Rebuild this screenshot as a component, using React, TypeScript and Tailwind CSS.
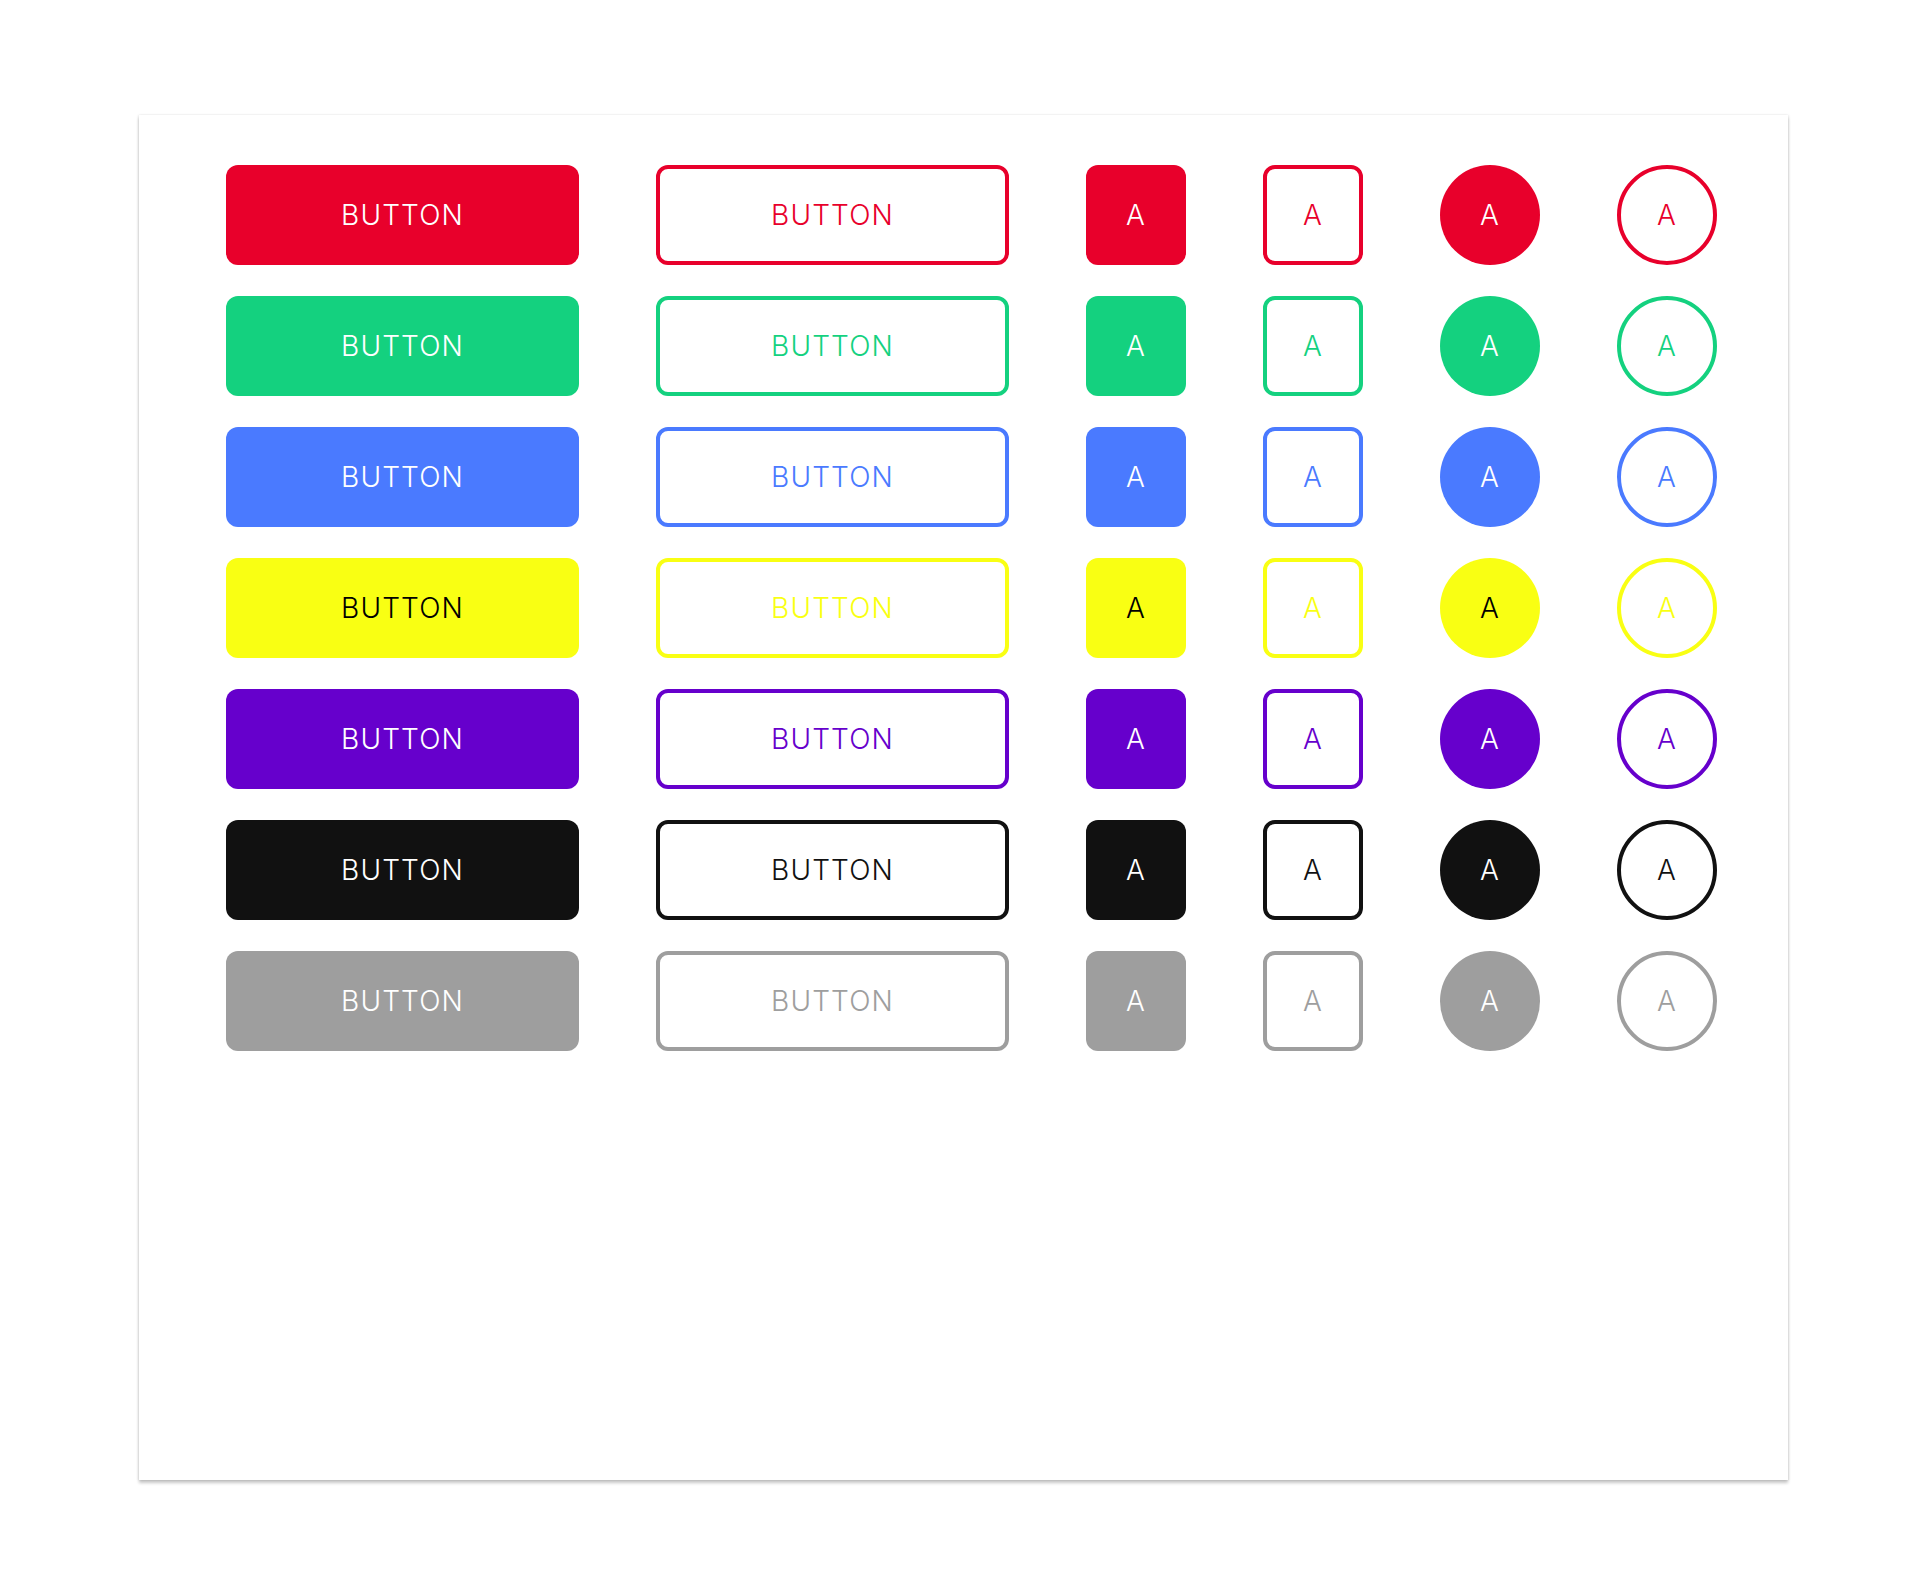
import React from "react";

type V = { fill: string; text: string; outline: string; otext: string };

const rows: V[] = [
  { fill: "bg-[#e8002b]", text: "text-white", outline: "border-[#e8002b]", otext: "text-[#e8002b]" },
  { fill: "bg-[#14d17f]", text: "text-white", outline: "border-[#14d17f]", otext: "text-[#14d17f]" },
  { fill: "bg-[#4a7aff]", text: "text-white", outline: "border-[#4a7aff]", otext: "text-[#4a7aff]" },
  { fill: "bg-[#f9ff13]", text: "text-black", outline: "border-[#f9ff13]", otext: "text-[#f9ff13]" },
  { fill: "bg-[#6600cc]", text: "text-white", outline: "border-[#6600cc]", otext: "text-[#6600cc]" },
  { fill: "bg-[#111111]", text: "text-white", outline: "border-[#111111]", otext: "text-[#111111]" },
  { fill: "bg-[#9e9e9e]", text: "text-white", outline: "border-[#9e9e9e]", otext: "text-[#9e9e9e]" },
];

const font = "font-['Inter','Open_Sans',sans-serif] font-light text-[28px] tracking-[0.04em] leading-none";

export default function App() {
  return (
    <div className="min-h-[1592px] w-[1928px] bg-white pt-[115px] pl-[139px]">
      <div className="w-[1649px] h-[1365px] bg-white shadow-[0_3px_3px_rgba(0,0,0,0.22),1px_0_2px_rgba(0,0,0,0.08),-1px_0_2px_rgba(0,0,0,0.08)] pl-[87px] pt-[50px]">
        <div className="flex flex-col gap-[31px]">
          {rows.map((r, i) => (
            <div key={i} className={`flex items-center gap-[77px] ${font}`}>
              <div className={`w-[353px] h-[100px] rounded-[12px] flex items-center justify-center ${r.fill} ${r.text}`}>
                BUTTON
              </div>
              <div className={`w-[353px] h-[100px] rounded-[12px] border-[4px] flex items-center justify-center ${r.outline} ${r.otext}`}>
                BUTTON
              </div>
              <div className={`w-[100px] h-[100px] rounded-[12px] flex items-center justify-center ${r.fill} ${r.text}`}>
                A
              </div>
              <div className={`w-[100px] h-[100px] rounded-[12px] border-[4px] flex items-center justify-center ${r.outline} ${r.otext}`}>
                A
              </div>
              <div className={`w-[100px] h-[100px] rounded-full flex items-center justify-center ${r.fill} ${r.text}`}>
                A
              </div>
              <div className={`w-[100px] h-[100px] rounded-full border-[4px] flex items-center justify-center ${r.outline} ${r.otext}`}>
                A
              </div>
            </div>
          ))}
        </div>
      </div>
    </div>
  );
}
